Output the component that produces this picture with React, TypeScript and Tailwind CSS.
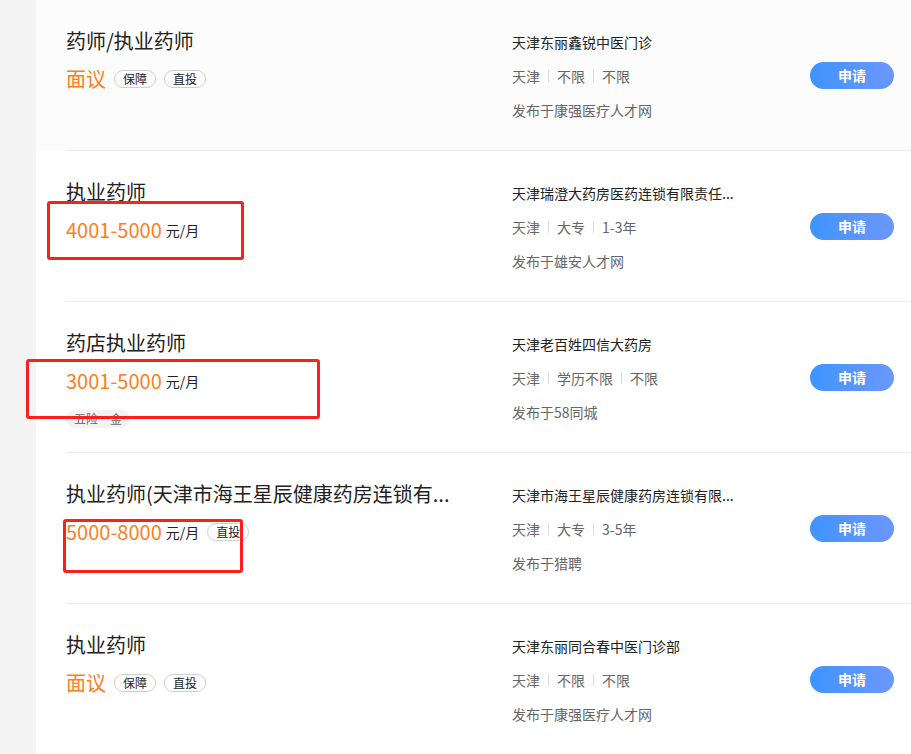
import React from "react";

type Job = {
  title: string;
  salary: string;
  unit?: boolean;
  tags?: string[];
  benefit?: string;
  company: string;
  meta: string[];
  source: string;
  hover?: boolean;
};

const jobs: Job[] = [
  {
    title: "药师/执业药师",
    salary: "面议",
    tags: ["保障", "直投"],
    company: "天津东丽鑫锐中医门诊",
    meta: ["天津", "不限", "不限"],
    source: "发布于康强医疗人才网",
    hover: true,
  },
  {
    title: "执业药师",
    salary: "4001-5000",
    unit: true,
    company: "天津瑞澄大药房医药连锁有限责任...",
    meta: ["天津", "大专", "1-3年"],
    source: "发布于雄安人才网",
  },
  {
    title: "药店执业药师",
    salary: "3001-5000",
    unit: true,
    benefit: "五险一金",
    company: "天津老百姓四信大药房",
    meta: ["天津", "学历不限", "不限"],
    source: "发布于58同城",
  },
  {
    title: "执业药师(天津市海王星辰健康药房连锁有...",
    salary: "5000-8000",
    unit: true,
    tags: ["直投"],
    company: "天津市海王星辰健康药房连锁有限...",
    meta: ["天津", "大专", "3-5年"],
    source: "发布于猎聘",
  },
  {
    title: "执业药师",
    salary: "面议",
    tags: ["保障", "直投"],
    company: "天津东丽同合春中医门诊部",
    meta: ["天津", "不限", "不限"],
    source: "发布于康强医疗人才网",
  },
];

function Row({ job }: { job: Job }) {
  return (
    <div className={`pl-[30px] ${job.hover ? "bg-[#fcfcfc]" : "bg-white"}`}>
      <div className="flex h-[151px] items-start border-b border-[#ebebeb]">
        <div className="w-[446px] shrink-0 pt-[27px]">
          <div className="h-[28px] whitespace-nowrap text-[20px] leading-[28px] text-[#222]">
            {job.title}
          </div>
          <div className="mt-[10px] flex h-[28px] items-center">
            <span className="text-[20px] leading-[28px] text-[#ff7d22]">{job.salary}</span>
            {job.unit && <span className="ml-[4px] text-[14px] text-[#222]">元/月</span>}
            {job.tags?.map((t) => (
              <span
                key={t}
                className="ml-[8px] flex h-[18px] items-center rounded-full border border-[#cfcfcf] px-[8px] text-[12px] leading-none text-[#222]"
              >
                {t}
              </span>
            ))}
          </div>
          {job.benefit && (
            <div className="mt-[15px] flex">
              <span className="flex h-[18px] items-center rounded-full bg-[#f2f2f2] px-[8px] text-[12px] leading-none text-[#666]">
                {job.benefit}
              </span>
            </div>
          )}
        </div>
        <div className="w-[226px] shrink-0 pt-[32px]">
          <div className="whitespace-nowrap text-[14px] leading-[20px] text-[#222]">{job.company}</div>
          <div className="mt-[14px] flex items-center text-[14px] leading-[20px] text-[#666]">
            {job.meta.map((m, i) => (
              <React.Fragment key={i}>
                {i > 0 && <span className="mx-[8px] h-[12px] w-px bg-[#dcdcdc]" />}
                <span>{m}</span>
              </React.Fragment>
            ))}
          </div>
          <div className="mt-[14px] text-[14px] leading-[20px] text-[#666]">{job.source}</div>
        </div>
        <div className="ml-auto mr-[17px] self-center">
          <button className="flex h-[27px] w-[84px] items-center justify-center rounded-full bg-gradient-to-r from-[#3e94ff] to-[#6a97fe] text-[14px] font-bold text-white">
            申请
          </button>
        </div>
      </div>
    </div>
  );
}

export default function App() {
  return (
    <div
      className="relative flex h-[754px] w-[911px] overflow-hidden bg-white"
      style={{ fontFamily: '"Noto Sans CJK SC", "Noto Sans", sans-serif' }}
    >
      <div className="w-[36px] shrink-0 bg-[#f4f4f4]" />
      <div className="flex-1">
        {jobs.map((j, i) => (
          <Row key={i} job={j} />
        ))}
      </div>
      <div className="pointer-events-none absolute left-[47px] top-[201px] h-[59px] w-[197px] rounded-[3px] border-[3px] border-[#ff1f1a]" />
      <div className="pointer-events-none absolute left-[26px] top-[359px] h-[60px] w-[294px] rounded-[3px] border-[3px] border-[#ff1f1a]" />
      <div className="pointer-events-none absolute left-[63px] top-[519px] h-[54px] w-[180px] rounded-[3px] border-[3px] border-[#ff1f1a]" />
    </div>
  );
}
